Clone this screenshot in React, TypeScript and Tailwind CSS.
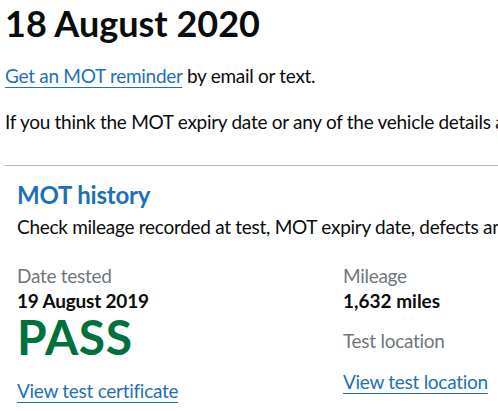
export default function App() {
  return (
    <div className="w-full overflow-hidden bg-white text-[#0b0c0c] font-['Lato','Liberation_Sans',Arial,sans-serif]">
      <div className="w-[960px] pl-[5px] pt-[3px] tracking-[-0.28px]">
        <h1 className="text-[36px] leading-[40px] font-bold tracking-normal">18 August 2020</h1>
        <p className="mt-[20px] text-[19px] leading-[25px]">
          <a href="#" className="text-[#1d70b8] underline decoration-1 underline-offset-[4px]">
            Get an MOT reminder
          </a>{" "}
          by email or text.
        </p>
        <p className="mt-[21px] text-[19px] leading-[25px] whitespace-nowrap">
          If you think the MOT expiry date or any of the vehicle details are wrong, contact DVSA.
        </p>

        <section className="mt-[31px] border-t border-[#b1b4b6] pl-3 pt-[14px]">
          <h2 className="text-[24px] leading-[30px] font-bold tracking-[-0.2px] text-[#1d70b8]">MOT history</h2>
          <p className="mt-[4px] text-[19px] leading-[25px] whitespace-nowrap">
            Check mileage recorded at test, MOT expiry date, defects and advisory items.
          </p>

          <div className="mt-[24px] grid grid-cols-[326px_1fr] text-[19px] leading-[25px]">
            <div>
              <div className="text-[#6f777b]">Date tested</div>
              <div className="font-bold tracking-[-0.2px]">19 August 2019</div>
              <div className="text-[48px] leading-[48px] font-bold tracking-[0.6px] text-[#00703c]">PASS</div>
              <a href="#" className="mt-[17px] inline-block text-[#1d70b8] underline decoration-1 underline-offset-[4px]">
                View test certificate
              </a>
            </div>
            <div>
              <div className="text-[#6f777b]">Mileage</div>
              <div className="font-bold tracking-normal">1,632 miles</div>
              <div className="mt-[15px] text-[#6f777b]">Test location</div>
              <a href="#" className="mt-[16px] inline-block text-[#1d70b8] underline decoration-1 underline-offset-[4px]">
                View test location
              </a>
            </div>
          </div>
        </section>
      </div>
    </div>
  );
}
